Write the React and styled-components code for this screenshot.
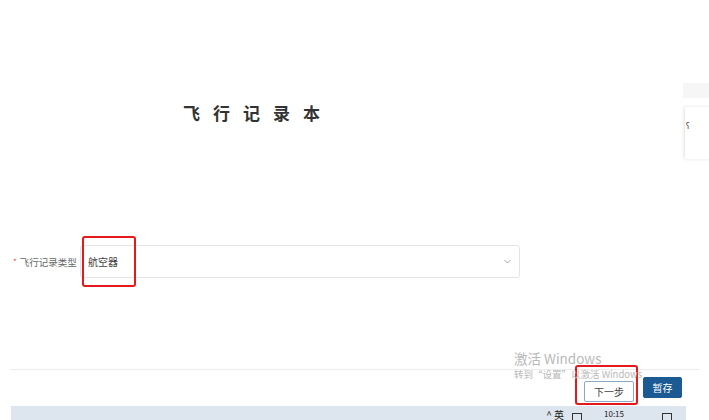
import React from 'react'
import styled, { createGlobalStyle } from 'styled-components'

const Global = createGlobalStyle`
  html, body { margin: 0; padding: 0; background: #fff; }
  body { font-family: "Noto Sans CJK SC", "Noto Sans", "Liberation Sans", sans-serif; }
`

const Page = styled.div`
  position: relative;
  width: 709px;
  height: 420px;
  overflow: hidden;
  background: #fff;
  display: flex;
  flex-direction: column;
`

const Title = styled.h1`
  margin: 101px 0 0 183px;
  font-size: 17px;
  line-height: 24px;
  font-weight: 700;
  color: #333;
  letter-spacing: 13px;
`

const FormRow = styled.div`
  display: flex;
  align-items: center;
  margin: 120px 0 0 13px;
  height: 33px;
`

const Label = styled.label`
  display: flex;
  align-items: center;
  width: 67px;
  font-size: 9.5px;
  color: #666;
  white-space: nowrap;
  span {
    color: #e34d4d;
    margin-right: 3px;
    font-size: 8px;
  }
`

const Select = styled.div`
  box-sizing: border-box;
  width: 440px;
  height: 33px;
  border: 1px solid #e4e4e4;
  border-radius: 3px;
  display: flex;
  align-items: center;
  justify-content: space-between;
  padding: 0 8px 0 7px;
  font-size: 10px;
  color: #444;
`

const Marked = styled.span`
  position: relative;
`

const Highlight = styled.i`
  position: absolute;
  box-sizing: border-box;
  border: 2px solid #e5191b;
  border-radius: 3px;
  left: ${p => p.$l}px;
  right: ${p => p.$r}px;
  top: ${p => p.$t}px;
  bottom: ${p => p.$b}px;
  pointer-events: none;
`

const Footer = styled.div`
  margin: 91px 9px 0 10px;
  border-top: 1px solid #ececec;
  display: flex;
  justify-content: flex-end;
  gap: 9px;
  padding: 7px 18px 0 0;
  height: 21px;
`

const Button = styled.button`
  box-sizing: border-box;
  height: 21px;
  width: ${p => p.$w}px;
  padding: 0;
  font-family: inherit;
  font-size: 10px;
  border-radius: 2px;
  border: 1px solid ${p => (p.$primary ? '#1b5a93' : '#8aa9c6')};
  background: ${p => (p.$primary ? '#1b5a93' : '#fff')};
  color: ${p => (p.$primary ? '#fff' : '#444')};
`

const Taskbar = styled.div`
  margin: 8px 23px 0 11px;
  height: 14px;
  background: #dde5ee;
  display: flex;
  justify-content: flex-end;
  align-items: flex-start;
  gap: 8px;
  padding-right: 14px;
  font-size: 8px;
  color: #222;
  overflow: hidden;
`

const TrayItem = styled.span`
  line-height: 9px;
  font-size: ${p => p.$size || 8}px;
  margin-top: ${p => p.$top || 3}px;
  margin-right: ${p => p.$mr || 0}px;
`

const TrayBox = styled.span`
  width: 8px;
  height: 6px;
  margin-top: 7px;
  margin-right: ${p => p.$mr || 0}px;
  border: 1px solid #333;
  border-bottom: none;
`

const Watermark = styled.div`
  position: absolute;
  left: 514px;
  top: 350px;
  color: #b9b9b9;
  pointer-events: none;
  div:first-child { font-size: 13.5px; line-height: 17px; }
  div:last-child { font-size: 9.5px; line-height: 12px; margin-top: 1px; }
`

const SideTab = styled.div`
  position: absolute;
  left: 683px;
  top: 83px;
  width: 30px;
  height: 15px;
  background: #f6f6f6;
`

const SideCard = styled.div`
  position: absolute;
  left: 685px;
  top: 107px;
  width: 30px;
  height: 52px;
  background: #fff;
  box-shadow: -1px 0 3px rgba(0, 0, 0, 0.12);
  font-size: 8px;
  color: #333;
  padding: 13px 0 0 1px;
  box-sizing: border-box;
`

const Chevron = () => (
  <svg width="7" height="5" viewBox="0 0 7 5" fill="none">
    <path d="M0.5 1l3 3 3-3" stroke="#999" strokeWidth="0.9" />
  </svg>
)

export default function App() {
  return (
    <>
      <Global />
      <Page>
        <Title>飞行记录本</Title>
        <FormRow>
          <Label><span>*</span>飞行记录类型</Label>
          <Select>
            <Marked>
              航空器
              <Highlight $l={-6} $r={-18} $t={-18} $b={-18} />
            </Marked>
            <Chevron />
          </Select>
        </FormRow>
        <Footer>
          <Marked>
            <Button $w={50}>下一步</Button>
            <Highlight $l={-9} $r={-4} $t={-12} $b={-7} />
          </Marked>
          <Button $w={39} $primary>暂存</Button>
        </Footer>
        <Taskbar>
          <TrayItem $top={4} $size={10}>^ 英</TrayItem>
          <TrayBox $mr={14} />
          <TrayItem $top={0} $mr={30}>10:15</TrayItem>
          <TrayBox />
        </Taskbar>
        <Watermark>
          <div>激活 Windows</div>
          <div>转到“设置”以激活 Windows</div>
        </Watermark>
        <SideTab />
        <SideCard>ʕ</SideCard>
      </Page>
    </>
  )
}
